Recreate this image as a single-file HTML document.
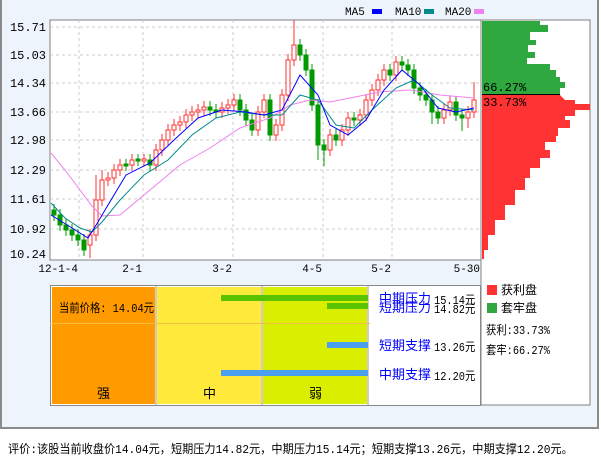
<!DOCTYPE html>
<html><head><meta charset="utf-8"><style>
body{margin:0;width:601px;height:456px;background:#fff;font-family:"Liberation Mono","Noto Sans CJK SC",monospace;overflow:hidden;position:relative}
.frame{position:absolute;left:0;top:0;width:595px;height:427px;border:2px solid #8a8a8a;border-top:none;background:#EEF4FB}
.t{position:absolute;font-size:12px;white-space:nowrap;line-height:14px}
.cj{font-family:"Liberation Mono","Noto Sans CJK SC",monospace}
.v{transform:scaleX(0.86);transform-origin:left}
</style></head><body>
<div class="frame"></div>
<svg style="position:absolute;left:0;top:0" width="601" height="456" font-family="Liberation Mono, monospace" font-size="12">
<g font-size="11">
<text x="345" y="15">MA5</text><rect x="372" y="9" width="10" height="5" fill="#0000ff"/>
<text x="395" y="15">MA10</text><rect x="424" y="9" width="10" height="5" fill="#008b8b"/>
<text x="445" y="15">MA20</text><rect x="474" y="9" width="10" height="5" fill="#ee82ee"/>
</g>
<rect x="50" y="20" width="431" height="240" fill="#fff" stroke="#808080"/>
<g stroke="#ccc" stroke-dasharray="3,3">
<line x1="50" y1="27" x2="481" y2="27"/><line x1="50" y1="55" x2="481" y2="55"/><line x1="50" y1="83" x2="481" y2="83"/><line x1="50" y1="112" x2="481" y2="112"/><line x1="50" y1="140" x2="481" y2="140"/><line x1="50" y1="170" x2="481" y2="170"/><line x1="50" y1="199" x2="481" y2="199"/><line x1="50" y1="229" x2="481" y2="229"/>
<line x1="79" y1="20" x2="79" y2="260"/><line x1="143" y1="20" x2="143" y2="260"/><line x1="233" y1="20" x2="233" y2="260"/><line x1="323" y1="20" x2="323" y2="260"/><line x1="392" y1="20" x2="392" y2="260"/>
</g>
<g text-anchor="end">
<text x="46" y="31">15.71</text><text x="46" y="59">15.03</text><text x="46" y="87">14.34</text><text x="46" y="116">13.66</text><text x="46" y="144">12.98</text><text x="46" y="174">12.29</text><text x="46" y="203">11.61</text><text x="46" y="233">10.92</text><text x="46" y="258">10.24</text>
</g>
<g text-anchor="end" font-size="11">
<text x="78" y="272">12-1-4</text><text x="142" y="272">2-1</text><text x="232" y="272">3-2</text><text x="322" y="272">4-5</text><text x="391" y="272">5-2</text><text x="480" y="272">5-30</text>
</g>
<g stroke-width="1">
<g stroke="#009900" fill="#009900">
<line x1="54" y1="204" x2="54" y2="221"/><rect x="52" y="210" width="4" height="5"/>
<line x1="60" y1="209" x2="60" y2="231"/><rect x="58" y="215" width="4" height="10"/>
<line x1="66" y1="219" x2="66" y2="236"/><rect x="64" y="225" width="4" height="5"/>
<line x1="72" y1="224" x2="72" y2="241"/><rect x="70" y="230" width="4" height="5"/>
<line x1="78" y1="229" x2="78" y2="246"/><rect x="76" y="235" width="4" height="5"/>
<line x1="84" y1="234" x2="84" y2="256"/><rect x="82" y="240" width="4" height="10"/>
<line x1="126" y1="159" x2="126" y2="171"/><rect x="124" y="164" width="4" height="2"/>
<line x1="138" y1="154" x2="138" y2="166"/><rect x="136" y="159" width="4" height="2"/>
<line x1="150" y1="154" x2="150" y2="171"/><rect x="148" y="160" width="4" height="5"/>
<line x1="210" y1="101" x2="210" y2="116"/><rect x="208" y="107" width="4" height="3"/>
<line x1="216" y1="104" x2="216" y2="118"/><rect x="214" y="110" width="4" height="2"/>
<line x1="240" y1="94" x2="240" y2="116"/><rect x="238" y="100" width="4" height="10"/>
<line x1="246" y1="104" x2="246" y2="126"/><rect x="244" y="110" width="4" height="10"/>
<line x1="252" y1="114" x2="252" y2="136"/><rect x="250" y="120" width="4" height="10"/>
<line x1="270" y1="94" x2="270" y2="141"/><rect x="268" y="100" width="4" height="35"/>
<line x1="300" y1="39" x2="300" y2="61"/><rect x="298" y="45" width="4" height="10"/>
<line x1="306" y1="49" x2="306" y2="76"/><rect x="304" y="55" width="4" height="15"/>
<line x1="312" y1="64" x2="312" y2="111"/><rect x="310" y="70" width="4" height="35"/>
<line x1="318" y1="99" x2="318" y2="160"/><rect x="316" y="105" width="4" height="40"/>
<line x1="324" y1="139" x2="324" y2="166"/><rect x="322" y="145" width="4" height="5"/>
<line x1="336" y1="129" x2="336" y2="146"/><rect x="334" y="135" width="4" height="5"/>
<line x1="354" y1="112" x2="354" y2="126"/><rect x="352" y="118" width="4" height="2"/>
<line x1="390" y1="64" x2="390" y2="81"/><rect x="388" y="70" width="4" height="5"/>
<line x1="402" y1="56" x2="402" y2="71"/><rect x="400" y="62" width="4" height="3"/>
<line x1="408" y1="59" x2="408" y2="76"/><rect x="406" y="65" width="4" height="5"/>
<line x1="414" y1="64" x2="414" y2="94"/><rect x="412" y="70" width="4" height="18"/>
<line x1="420" y1="82" x2="420" y2="101"/><rect x="418" y="88" width="4" height="7"/>
<line x1="426" y1="89" x2="426" y2="106"/><rect x="424" y="95" width="4" height="5"/>
<line x1="432" y1="94" x2="432" y2="124"/><rect x="430" y="100" width="4" height="12"/>
<line x1="438" y1="106" x2="438" y2="124"/><rect x="436" y="112" width="4" height="6"/>
<line x1="456" y1="96" x2="456" y2="121"/><rect x="454" y="102" width="4" height="13"/>
<line x1="462" y1="109" x2="462" y2="131"/><rect x="460" y="115" width="4" height="3"/>
</g>
<g stroke="#ff3333" fill="#fff">
<line x1="90" y1="229" x2="90" y2="258"/><rect x="88" y="235" width="4" height="10"/>
<line x1="96" y1="175" x2="96" y2="241"/><rect x="94" y="200" width="4" height="35"/>
<line x1="102" y1="170" x2="102" y2="206"/><rect x="100" y="180" width="4" height="20"/>
<line x1="108" y1="172" x2="108" y2="186"/><rect x="106" y="178" width="4" height="2"/>
<line x1="114" y1="164" x2="114" y2="184"/><rect x="112" y="170" width="4" height="8"/>
<line x1="120" y1="159" x2="120" y2="176"/><rect x="118" y="165" width="4" height="5"/>
<line x1="132" y1="154" x2="132" y2="171"/><rect x="130" y="160" width="4" height="5"/>
<line x1="144" y1="154" x2="144" y2="166"/><rect x="142" y="159" width="4" height="2"/>
<line x1="156" y1="144" x2="156" y2="171"/><rect x="154" y="150" width="4" height="15"/>
<line x1="162" y1="134" x2="162" y2="156"/><rect x="160" y="140" width="4" height="10"/>
<line x1="168" y1="124" x2="168" y2="146"/><rect x="166" y="130" width="4" height="10"/>
<line x1="174" y1="119" x2="174" y2="136"/><rect x="172" y="125" width="4" height="5"/>
<line x1="180" y1="116" x2="180" y2="131"/><rect x="178" y="122" width="4" height="3"/>
<line x1="186" y1="109" x2="186" y2="128"/><rect x="184" y="115" width="4" height="7"/>
<line x1="192" y1="106" x2="192" y2="121"/><rect x="190" y="112" width="4" height="3"/>
<line x1="198" y1="104" x2="198" y2="118"/><rect x="196" y="110" width="4" height="2"/>
<line x1="204" y1="101" x2="204" y2="116"/><rect x="202" y="107" width="4" height="3"/>
<line x1="222" y1="102" x2="222" y2="118"/><rect x="220" y="108" width="4" height="4"/>
<line x1="228" y1="99" x2="228" y2="114"/><rect x="226" y="105" width="4" height="3"/>
<line x1="234" y1="94" x2="234" y2="111"/><rect x="232" y="100" width="4" height="5"/>
<line x1="258" y1="106" x2="258" y2="136"/><rect x="256" y="112" width="4" height="18"/>
<line x1="264" y1="94" x2="264" y2="118"/><rect x="262" y="100" width="4" height="12"/>
<line x1="276" y1="119" x2="276" y2="141"/><rect x="274" y="125" width="4" height="10"/>
<line x1="282" y1="89" x2="282" y2="131"/><rect x="280" y="95" width="4" height="30"/>
<line x1="288" y1="54" x2="288" y2="101"/><rect x="286" y="60" width="4" height="35"/>
<line x1="294" y1="20" x2="294" y2="66"/><rect x="292" y="45" width="4" height="15"/>
<line x1="330" y1="129" x2="330" y2="156"/><rect x="328" y="135" width="4" height="15"/>
<line x1="342" y1="124" x2="342" y2="146"/><rect x="340" y="130" width="4" height="10"/>
<line x1="348" y1="112" x2="348" y2="136"/><rect x="346" y="118" width="4" height="12"/>
<line x1="360" y1="109" x2="360" y2="126"/><rect x="358" y="115" width="4" height="5"/>
<line x1="366" y1="94" x2="366" y2="121"/><rect x="364" y="100" width="4" height="15"/>
<line x1="372" y1="84" x2="372" y2="106"/><rect x="370" y="90" width="4" height="10"/>
<line x1="378" y1="74" x2="378" y2="96"/><rect x="376" y="80" width="4" height="10"/>
<line x1="384" y1="64" x2="384" y2="86"/><rect x="382" y="70" width="4" height="10"/>
<line x1="396" y1="56" x2="396" y2="81"/><rect x="394" y="62" width="4" height="13"/>
<line x1="444" y1="104" x2="444" y2="124"/><rect x="442" y="110" width="4" height="8"/>
<line x1="450" y1="96" x2="450" y2="116"/><rect x="448" y="102" width="4" height="8"/>
<line x1="468" y1="106" x2="468" y2="128"/><rect x="466" y="112" width="4" height="6"/>
<line x1="474" y1="82" x2="474" y2="118"/><rect x="472" y="100" width="4" height="12"/>
</g>
</g>
<g fill="none" stroke-width="1">
<polyline stroke="#ee82ee" points="51,153 65,170 80,190 92,206 102,216 120,215 150,190 180,165 210,148 240,128 270,118 290,105 310,100 330,102 350,98 380,92 410,90 440,95 474,98"/>
<polyline stroke="#008b8b" points="51,203 65,218 80,228 92,232 102,222 120,200 144,175 168,160 192,135 216,118 240,112 264,115 282,115 300,95 318,100 336,125 354,128 372,110 396,88 414,80 432,95 450,108 474,110"/>
<polyline stroke="#0000ff" points="51,215 72,228 88,238 98,222 108,205 126,175 150,163 174,140 198,118 222,110 246,112 264,115 282,110 300,75 318,95 330,125 348,135 366,120 384,90 402,70 420,85 438,108 456,112 474,108"/>
</g>
<rect x="481" y="20" width="109" height="385" fill="#fff" stroke="#808080"/>
<polygon fill="#2fa83f" points="482,21 540,21 540,25 548,25 548,32 530,32 530,40 536,40 536,45 528,45 528,52 535,52 535,58 527,58 527,64 550,64 550,70 556,70 556,77 560,77 560,82 565,82 565,88 560,88 560,94 482,94"/>
<line x1="482" y1="94.5" x2="560" y2="94.5" stroke="#000"/>
<polygon fill="#ff3333" points="482,95 560,95 565,100 575,100 575,104 590,104 590,110 575,110 575,116 565,116 565,120 570,120 570,128 558,128 558,136 556,136 556,142 545,142 545,150 550,150 550,158 540,158 540,168 530,168 530,178 525,178 525,190 515,190 515,205 505,205 505,220 495,220 495,235 488,235 488,250 484,250 484,259 482,259"/>
<text x="483" y="91">66.27%</text><text x="483" y="106">33.73%</text>
<rect x="50.5" y="285.5" width="430" height="120" fill="#fff" stroke="#888"/>
<rect x="52" y="287" width="103" height="117" fill="#FF9A00"/>
<rect x="157" y="287" width="104" height="117" fill="#FFE93A"/>
<rect x="263" y="287" width="104" height="117" fill="#DAEE00"/>
<g stroke="#999"><line x1="156" y1="286" x2="156" y2="405"/><line x1="262" y1="286" x2="262" y2="405"/><line x1="368" y1="286" x2="368" y2="405"/></g>
<line x1="50" y1="323.5" x2="370" y2="323.5" stroke="#f2c040"/>
<rect x="221" y="295" width="147" height="6" fill="#5ac300"/>
<rect x="327" y="303" width="41" height="6" fill="#5ac300"/>
<rect x="327" y="342" width="41" height="6" fill="#4a9ff0"/>
<rect x="221" y="370" width="147" height="6" fill="#4a9ff0"/>
</svg>
<div class="t cj v" style="left:59px;top:302px">当前价格: 14.04元</div>
<div class="t cj" style="left:97px;top:388px;font-size:13px">强</div>
<div class="t cj" style="left:203px;top:388px;font-size:13px">中</div>
<div class="t cj" style="left:309px;top:388px;font-size:13px">弱</div>
<div class="t cj" style="left:379px;top:293px;color:#0000ff;font-size:13px">中期压力</div>
<div class="t cj v" style="left:434px;top:294px">15.14元</div>
<div class="t cj" style="left:379px;top:302px;color:#0000ff;font-size:13px">短期压力</div>
<div class="t cj v" style="left:434px;top:303px">14.82元</div>
<div class="t cj" style="left:379px;top:340px;color:#0000ff;font-size:13px">短期支撑</div>
<div class="t cj v" style="left:434px;top:341px">13.26元</div>
<div class="t cj" style="left:379px;top:369px;color:#0000ff;font-size:13px">中期支撑</div>
<div class="t cj v" style="left:434px;top:370px">12.20元</div>
<div style="position:absolute;left:487px;top:285px;width:10px;height:10px;background:#ff3333"></div>
<div style="position:absolute;left:487px;top:303px;width:10px;height:10px;background:#2fa83f"></div>
<div class="t cj" style="left:501px;top:284px">获利盘</div>
<div class="t cj" style="left:501px;top:302px">套牢盘</div>
<div class="t cj v" style="left:486px;top:324px">获利:33.73%</div>
<div class="t cj v" style="left:486px;top:344px">套牢:66.27%</div>
<div class="t cj" style="left:8px;top:443px;transform:scaleX(0.93);transform-origin:left">评价:该股当前收盘价14.04元，短期压力14.82元，中期压力15.14元；短期支撑13.26元，中期支撑12.20元。</div>
</body></html>
